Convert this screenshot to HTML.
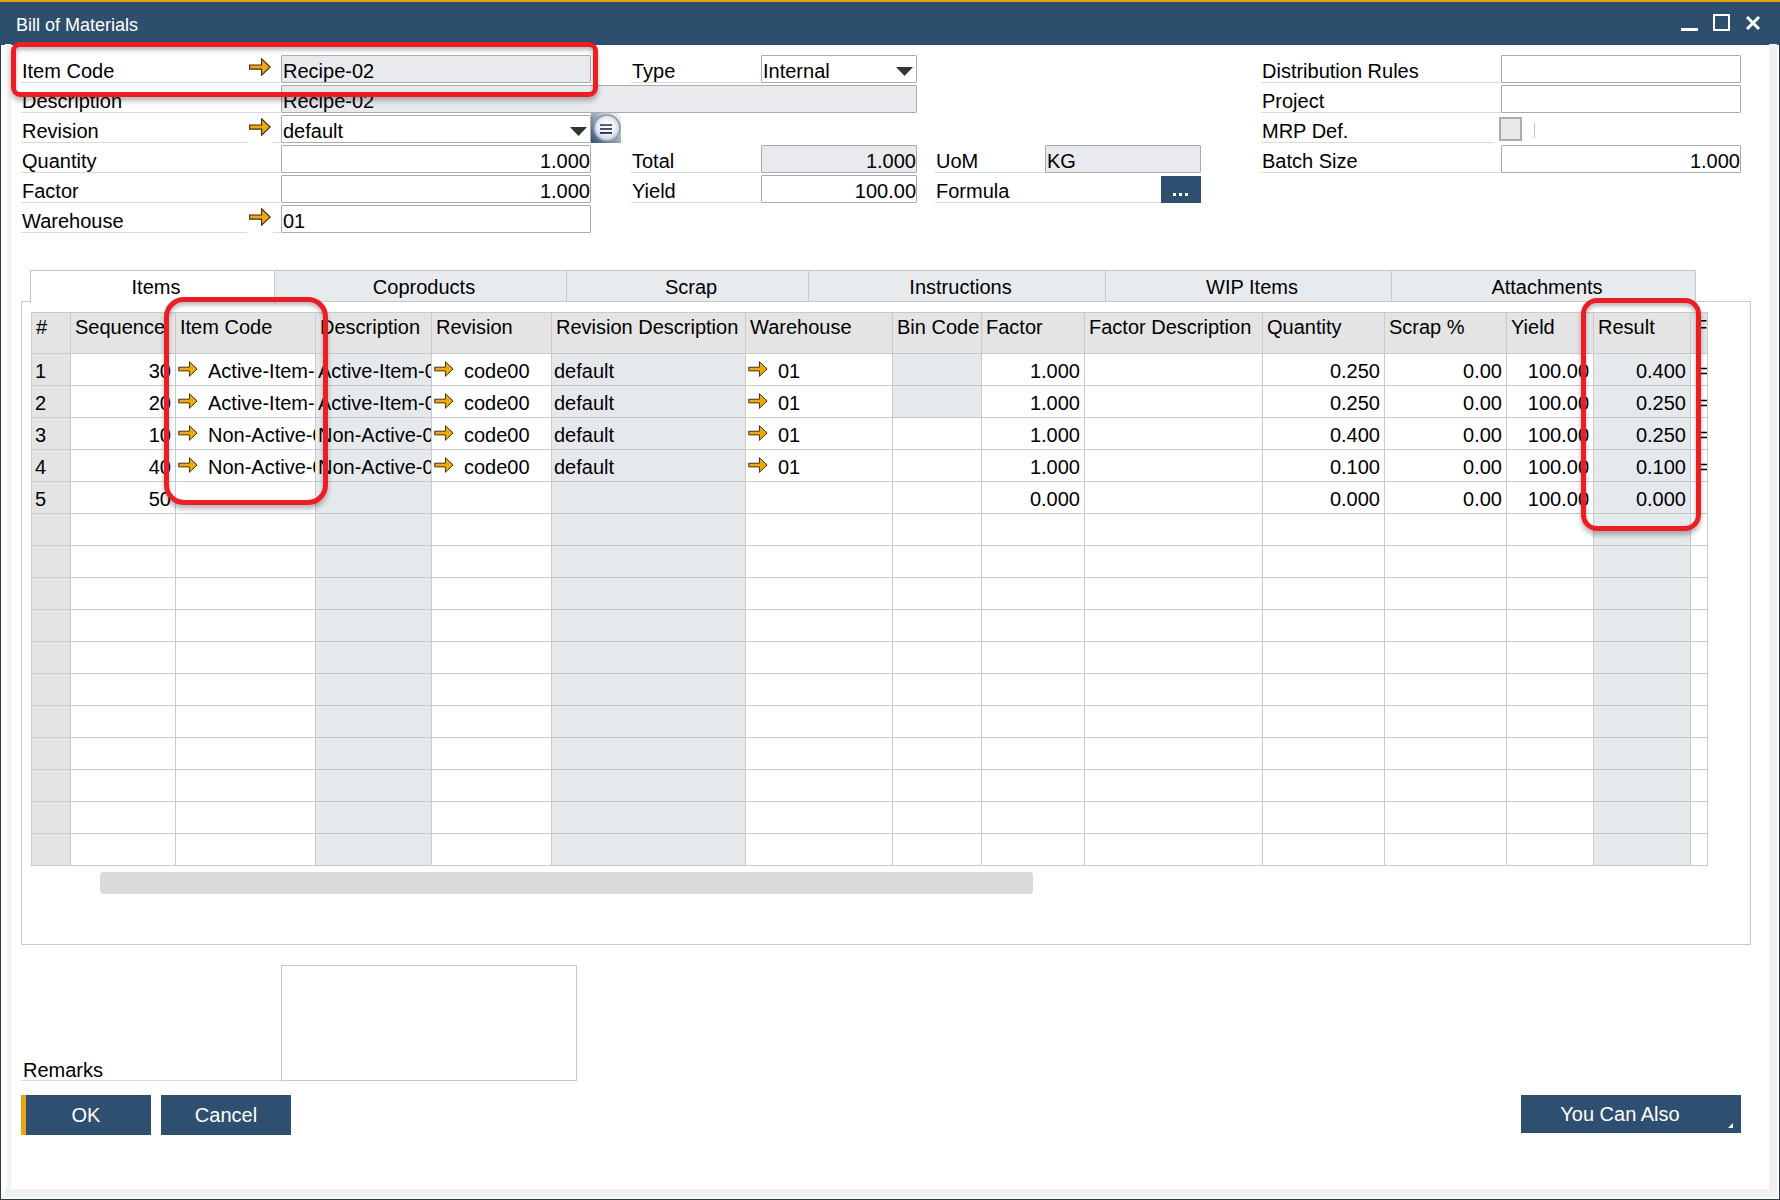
<!DOCTYPE html><html><head><meta charset="utf-8"><style>
*{box-sizing:border-box;margin:0;padding:0}
html,body{width:1780px;height:1200px;overflow:hidden;background:#fff}
body{position:relative;font-family:"Liberation Sans",sans-serif;font-size:20px;color:#000}
.a{position:absolute}
.l{position:absolute;white-space:nowrap;line-height:20px;height:20px}
.ul{position:absolute;height:1px;background:#dadada}
.f{position:absolute;border:1px solid #ababab;border-radius:1px;background:#fff;white-space:nowrap;overflow:hidden}
.f.g{background:#e8eaed}
.f .t{position:absolute;top:5px;left:1px;line-height:20px}
.f .tr{position:absolute;top:5px;right:0px;line-height:20px}
.arr{position:absolute}
.tab{position:absolute;top:270px;height:32px;background:#e8ebee;border-top:1px solid #c4c4c4;border-right:1px solid #c8c8c8;border-bottom:1px solid #c8c8c8;text-align:center;line-height:20px;padding-top:6px;padding-left:7px}
.btn{position:absolute;background:#2e4f6f;color:#fff;text-align:center;line-height:20px}
.rb{position:absolute;border:5px solid #ec1d25;border-radius:16px;box-shadow:inset 0 3px 4px rgba(0,0,0,.28), 0 4px 5px rgba(0,0,0,.28)}
.gc{position:absolute;white-space:nowrap;overflow:hidden;line-height:20px}
</style></head><body>
<div class="a" style="left:0;top:0;width:1780px;height:2px;background:#e5a00b"></div>
<div class="a" style="left:0;top:2px;width:1780px;height:43px;background:#2d4e6c"></div>
<div class="l" style="left:16px;top:15px;font-size:18px;color:#fff">Bill of Materials</div>
<div class="a" style="left:1681px;top:28px;width:17px;height:3px;background:#fff"></div>
<div class="a" style="left:1713px;top:14px;width:17px;height:17px;border:2px solid #fff"></div>
<svg class="a" style="left:1744px;top:14px" width="18" height="18" viewBox="0 0 18 18"><path d="M3 3L15 15M15 3L3 15" stroke="#fff" stroke-width="3"/></svg>
<div class="a" style="left:0;top:44px;width:1px;height:1156px;background:#283b56"></div>
<div class="a" style="left:1779px;top:44px;width:1px;height:1156px;background:#283b56"></div>
<div class="a" style="left:0;top:1199px;width:1780px;height:1px;background:#283b56"></div>
<div class="a" style="left:5px;top:44px;width:6px;height:1145px;background:linear-gradient(to right,#fbfbfb,#efefef)"></div>
<div class="a" style="left:1769px;top:44px;width:8px;height:1153px;background:#f0f0f0"></div>
<div class="a" style="left:5px;top:1189px;width:1772px;height:8px;background:#f0f0f0"></div>
<div class="l" style="left:22px;top:61px">Item Code</div>
<div class="ul" style="left:21px;top:82px;width:260px"></div>
<div class="l" style="left:22px;top:91px">Description</div>
<div class="ul" style="left:21px;top:112px;width:260px"></div>
<div class="l" style="left:22px;top:121px">Revision</div>
<div class="ul" style="left:21px;top:142px;width:226px"></div>
<div class="ul" style="left:273px;top:142px;width:8px"></div>
<div class="l" style="left:22px;top:151px">Quantity</div>
<div class="ul" style="left:21px;top:172px;width:260px"></div>
<div class="l" style="left:22px;top:181px">Factor</div>
<div class="ul" style="left:21px;top:202px;width:260px"></div>
<div class="l" style="left:22px;top:211px">Warehouse</div>
<div class="ul" style="left:21px;top:232px;width:226px"></div>
<div class="ul" style="left:273px;top:232px;width:8px"></div>
<svg class="arr" style="left:249px;top:58px" width="22" height="18" viewBox="0 0 22 18"><path d="M0.6 7H12.6V0.8L21.2 9L12.6 17.2V11.1H0.6Z" fill="#efa80e" stroke="#3d2c0c" stroke-width="1.1" stroke-linejoin="miter"/></svg>
<svg class="arr" style="left:249px;top:118px" width="22" height="18" viewBox="0 0 22 18"><path d="M0.6 7H12.6V0.8L21.2 9L12.6 17.2V11.1H0.6Z" fill="#efa80e" stroke="#3d2c0c" stroke-width="1.1" stroke-linejoin="miter"/></svg>
<svg class="arr" style="left:249px;top:208px" width="22" height="18" viewBox="0 0 22 18"><path d="M0.6 7H12.6V0.8L21.2 9L12.6 17.2V11.1H0.6Z" fill="#efa80e" stroke="#3d2c0c" stroke-width="1.1" stroke-linejoin="miter"/></svg>
<div class="f g" style="left:281px;top:55px;width:310px;height:28px"><span class="t">Recipe-02</span></div>
<div class="f g" style="left:281px;top:85px;width:636px;height:28px"><span class="t">Recipe-02</span></div>
<div class="f" style="left:281px;top:115px;width:310px;height:28px"><span class="t">default</span><svg style="position:absolute;right:3px;top:11px" width="17" height="9" viewBox="0 0 17 9"><path d="M0 0H17L8.5 9Z" fill="#333"/></svg></div>
<div class="f" style="left:281px;top:145px;width:310px;height:28px"><span class="tr">1.000</span></div>
<div class="f" style="left:281px;top:175px;width:310px;height:28px"><span class="tr">1.000</span></div>
<div class="f" style="left:281px;top:205px;width:310px;height:28px"><span class="t">01</span></div>
<svg class="a" style="left:591px;top:113px" width="30" height="30" viewBox="0 0 30 30">
<defs><linearGradient id="bg1" x1="1" y1="0" x2="0" y2="1"><stop offset="0" stop-color="#ffffff"/><stop offset="0.5" stop-color="#9aa6b4"/><stop offset="1" stop-color="#2f4e74"/></linearGradient>
<radialGradient id="rg" cx="0.5" cy="0.45" r="0.55"><stop offset="0" stop-color="#ffffff"/><stop offset="0.55" stop-color="#eef3fa"/><stop offset="1" stop-color="#b8c6d8"/></radialGradient></defs>
<rect x="0" y="0" width="30" height="30" fill="url(#bg1)"/>
<circle cx="16" cy="15" r="13" fill="url(#rg)" stroke="#8f99a6" stroke-width="1.6"/>
<rect x="9" y="11.2" width="12" height="1.7" fill="#3a4858"/><rect x="9" y="15.1" width="12" height="1.7" fill="#30364c"/><rect x="9" y="19.1" width="12" height="1.7" fill="#1a1e40"/></svg>
<div class="l" style="left:632px;top:61px">Type</div>
<div class="ul" style="left:631px;top:82px;width:130px"></div>
<div class="f" style="left:761px;top:55px;width:156px;height:28px"><span class="t">Internal</span><svg style="position:absolute;right:3px;top:11px" width="17" height="9" viewBox="0 0 17 9"><path d="M0 0H17L8.5 9Z" fill="#333"/></svg></div>
<div class="l" style="left:632px;top:151px">Total</div>
<div class="ul" style="left:631px;top:172px;width:130px"></div>
<div class="f g" style="left:761px;top:145px;width:156px;height:28px"><span class="tr">1.000</span></div>
<div class="l" style="left:632px;top:181px">Yield</div>
<div class="ul" style="left:631px;top:202px;width:130px"></div>
<div class="f" style="left:761px;top:175px;width:156px;height:28px"><span class="tr">100.00</span></div>
<div class="l" style="left:936px;top:151px">UoM</div>
<div class="ul" style="left:935px;top:172px;width:110px"></div>
<div class="f g" style="left:1045px;top:145px;width:156px;height:28px"><span class="t">KG</span></div>
<div class="l" style="left:936px;top:181px">Formula</div>
<div class="ul" style="left:935px;top:202px;width:226px"></div>
<div class="btn" style="left:1161px;top:176px;width:40px;height:27px"><div class="a" style="left:12px;top:17px;width:3px;height:3px;background:#fff"></div><div class="a" style="left:18px;top:17px;width:3px;height:3px;background:#fff"></div><div class="a" style="left:24px;top:17px;width:3px;height:3px;background:#fff"></div></div>
<div class="l" style="left:1262px;top:61px">Distribution Rules</div>
<div class="ul" style="left:1261px;top:82px;width:240px"></div>
<div class="f" style="left:1501px;top:55px;width:240px;height:28px"></div>
<div class="l" style="left:1262px;top:91px">Project</div>
<div class="ul" style="left:1261px;top:112px;width:240px"></div>
<div class="f" style="left:1501px;top:85px;width:240px;height:28px"></div>
<div class="l" style="left:1262px;top:121px">MRP Def.</div>
<div class="ul" style="left:1261px;top:142px;width:233px"></div>
<div class="a" style="left:1499px;top:117px;width:23px;height:24px;background:#e9e9e9;border:2px solid #acacac"></div>
<div class="a" style="left:1534px;top:123px;width:1px;height:15px;background:#d8c09a"></div>
<div class="l" style="left:1262px;top:151px">Batch Size</div>
<div class="ul" style="left:1261px;top:172px;width:240px"></div>
<div class="f" style="left:1501px;top:145px;width:240px;height:28px"><span class="tr">1.000</span></div>
<div class="a" style="left:21px;top:301px;width:1730px;height:644px;border:1px solid #cbcbcb"></div>
<div class="tab" style="left:30px;width:245px;height:33px;background:#fff;border-left:1px solid #c4c4c4;border-bottom:none">Items</div>
<div class="tab" style="left:275px;width:292px">Coproducts</div>
<div class="tab" style="left:567px;width:242px">Scrap</div>
<div class="tab" style="left:809px;width:297px">Instructions</div>
<div class="tab" style="left:1106px;width:286px">WIP Items</div>
<div class="tab" style="left:1392px;width:304px">Attachments</div>
<div class="a" style="left:31px;top:312px;width:1676px;height:41px;background:#e4e4e4"></div>
<div class="a" style="left:31px;top:353px;width:39px;height:512px;background:#e4e4e4"></div>
<div class="a" style="left:315px;top:353px;width:116px;height:512px;background:#e6e9ec"></div>
<div class="a" style="left:551px;top:353px;width:194px;height:512px;background:#e6e9ec"></div>
<div class="a" style="left:1593px;top:353px;width:97px;height:512px;background:#e6e9ec"></div>
<div class="a" style="left:892px;top:353px;width:89px;height:64px;background:#e6e9ec"></div>
<div class="a" style="left:31px;top:312px;width:1px;height:554px;background:#cacaca"></div>
<div class="a" style="left:70px;top:312px;width:1px;height:554px;background:#cacaca"></div>
<div class="a" style="left:175px;top:312px;width:1px;height:554px;background:#cacaca"></div>
<div class="a" style="left:315px;top:312px;width:1px;height:554px;background:#cacaca"></div>
<div class="a" style="left:431px;top:312px;width:1px;height:554px;background:#cacaca"></div>
<div class="a" style="left:551px;top:312px;width:1px;height:554px;background:#cacaca"></div>
<div class="a" style="left:745px;top:312px;width:1px;height:554px;background:#cacaca"></div>
<div class="a" style="left:892px;top:312px;width:1px;height:554px;background:#cacaca"></div>
<div class="a" style="left:981px;top:312px;width:1px;height:554px;background:#cacaca"></div>
<div class="a" style="left:1084px;top:312px;width:1px;height:554px;background:#cacaca"></div>
<div class="a" style="left:1262px;top:312px;width:1px;height:554px;background:#cacaca"></div>
<div class="a" style="left:1384px;top:312px;width:1px;height:554px;background:#cacaca"></div>
<div class="a" style="left:1506px;top:312px;width:1px;height:554px;background:#cacaca"></div>
<div class="a" style="left:1593px;top:312px;width:1px;height:554px;background:#cacaca"></div>
<div class="a" style="left:1690px;top:312px;width:1px;height:554px;background:#cacaca"></div>
<div class="a" style="left:1707px;top:312px;width:1px;height:554px;background:#cacaca"></div>
<div class="a" style="left:31px;top:312px;width:1677px;height:1px;background:#cacaca"></div>
<div class="a" style="left:31px;top:353px;width:1677px;height:1px;background:#cacaca"></div>
<div class="a" style="left:31px;top:385px;width:1677px;height:1px;background:#cacaca"></div>
<div class="a" style="left:31px;top:417px;width:1677px;height:1px;background:#cacaca"></div>
<div class="a" style="left:31px;top:449px;width:1677px;height:1px;background:#cacaca"></div>
<div class="a" style="left:31px;top:481px;width:1677px;height:1px;background:#cacaca"></div>
<div class="a" style="left:31px;top:513px;width:1677px;height:1px;background:#cacaca"></div>
<div class="a" style="left:31px;top:545px;width:1677px;height:1px;background:#cacaca"></div>
<div class="a" style="left:31px;top:577px;width:1677px;height:1px;background:#cacaca"></div>
<div class="a" style="left:31px;top:609px;width:1677px;height:1px;background:#cacaca"></div>
<div class="a" style="left:31px;top:641px;width:1677px;height:1px;background:#cacaca"></div>
<div class="a" style="left:31px;top:673px;width:1677px;height:1px;background:#cacaca"></div>
<div class="a" style="left:31px;top:705px;width:1677px;height:1px;background:#cacaca"></div>
<div class="a" style="left:31px;top:737px;width:1677px;height:1px;background:#cacaca"></div>
<div class="a" style="left:31px;top:769px;width:1677px;height:1px;background:#cacaca"></div>
<div class="a" style="left:31px;top:801px;width:1677px;height:1px;background:#cacaca"></div>
<div class="a" style="left:31px;top:833px;width:1677px;height:1px;background:#cacaca"></div>
<div class="a" style="left:31px;top:865px;width:1677px;height:1px;background:#cacaca"></div>
<div class="gc" style="left:36px;top:317px;width:34px;height:24px">#</div>
<div class="gc" style="left:75px;top:317px;width:100px;height:24px">Sequence</div>
<div class="gc" style="left:180px;top:317px;width:135px;height:24px">Item Code</div>
<div class="gc" style="left:320px;top:317px;width:111px;height:24px">Description</div>
<div class="gc" style="left:436px;top:317px;width:115px;height:24px">Revision</div>
<div class="gc" style="left:556px;top:317px;width:189px;height:24px">Revision Description</div>
<div class="gc" style="left:750px;top:317px;width:142px;height:24px">Warehouse</div>
<div class="gc" style="left:897px;top:317px;width:84px;height:24px">Bin Code</div>
<div class="gc" style="left:986px;top:317px;width:98px;height:24px">Factor</div>
<div class="gc" style="left:1089px;top:317px;width:173px;height:24px">Factor Description</div>
<div class="gc" style="left:1267px;top:317px;width:117px;height:24px">Quantity</div>
<div class="gc" style="left:1389px;top:317px;width:117px;height:24px">Scrap %</div>
<div class="gc" style="left:1511px;top:317px;width:82px;height:24px">Yield</div>
<div class="gc" style="left:1598px;top:317px;width:92px;height:24px">Result</div>
<div class="gc" style="left:1695px;top:317px;width:12px;height:24px">F</div>
<div class="gc" style="left:35px;top:361px;width:35px;height:22px">1</div>
<div class="gc" style="left:70px;top:361px;width:105px;height:22px;text-align:right;padding-right:4px">30</div>
<svg class="arr" style="left:178px;top:361px" width="20" height="16" viewBox="0 0 22 18"><path d="M0.6 7H12.6V0.8L21.2 9L12.6 17.2V11.1H0.6Z" fill="#efa80e" stroke="#3d2c0c" stroke-width="1.1" stroke-linejoin="miter"/></svg>
<div class="gc" style="left:208px;top:361px;width:107px;height:22px">Active-Item-</div>
<div class="gc" style="left:318px;top:361px;width:113px;height:22px">Active-Item-0</div>
<svg class="arr" style="left:434px;top:361px" width="20" height="16" viewBox="0 0 22 18"><path d="M0.6 7H12.6V0.8L21.2 9L12.6 17.2V11.1H0.6Z" fill="#efa80e" stroke="#3d2c0c" stroke-width="1.1" stroke-linejoin="miter"/></svg>
<div class="gc" style="left:464px;top:361px;width:87px;height:22px">code00</div>
<div class="gc" style="left:554px;top:361px;width:191px;height:22px">default</div>
<svg class="arr" style="left:748px;top:361px" width="20" height="16" viewBox="0 0 22 18"><path d="M0.6 7H12.6V0.8L21.2 9L12.6 17.2V11.1H0.6Z" fill="#efa80e" stroke="#3d2c0c" stroke-width="1.1" stroke-linejoin="miter"/></svg>
<div class="gc" style="left:778px;top:361px;width:114px;height:22px">01</div>
<div class="gc" style="left:981px;top:361px;width:103px;height:22px;text-align:right;padding-right:4px">1.000</div>
<div class="gc" style="left:1262px;top:361px;width:122px;height:22px;text-align:right;padding-right:4px">0.250</div>
<div class="gc" style="left:1384px;top:361px;width:122px;height:22px;text-align:right;padding-right:4px">0.00</div>
<div class="gc" style="left:1506px;top:361px;width:87px;height:22px;text-align:right;padding-right:4px">100.00</div>
<div class="gc" style="left:1593px;top:361px;width:97px;height:22px;text-align:right;padding-right:4px">0.400</div>
<div class="gc" style="left:1697px;top:361px;width:10px;height:22px">=</div>
<div class="gc" style="left:35px;top:393px;width:35px;height:22px">2</div>
<div class="gc" style="left:70px;top:393px;width:105px;height:22px;text-align:right;padding-right:4px">20</div>
<svg class="arr" style="left:178px;top:393px" width="20" height="16" viewBox="0 0 22 18"><path d="M0.6 7H12.6V0.8L21.2 9L12.6 17.2V11.1H0.6Z" fill="#efa80e" stroke="#3d2c0c" stroke-width="1.1" stroke-linejoin="miter"/></svg>
<div class="gc" style="left:208px;top:393px;width:107px;height:22px">Active-Item-</div>
<div class="gc" style="left:318px;top:393px;width:113px;height:22px">Active-Item-0</div>
<svg class="arr" style="left:434px;top:393px" width="20" height="16" viewBox="0 0 22 18"><path d="M0.6 7H12.6V0.8L21.2 9L12.6 17.2V11.1H0.6Z" fill="#efa80e" stroke="#3d2c0c" stroke-width="1.1" stroke-linejoin="miter"/></svg>
<div class="gc" style="left:464px;top:393px;width:87px;height:22px">code00</div>
<div class="gc" style="left:554px;top:393px;width:191px;height:22px">default</div>
<svg class="arr" style="left:748px;top:393px" width="20" height="16" viewBox="0 0 22 18"><path d="M0.6 7H12.6V0.8L21.2 9L12.6 17.2V11.1H0.6Z" fill="#efa80e" stroke="#3d2c0c" stroke-width="1.1" stroke-linejoin="miter"/></svg>
<div class="gc" style="left:778px;top:393px;width:114px;height:22px">01</div>
<div class="gc" style="left:981px;top:393px;width:103px;height:22px;text-align:right;padding-right:4px">1.000</div>
<div class="gc" style="left:1262px;top:393px;width:122px;height:22px;text-align:right;padding-right:4px">0.250</div>
<div class="gc" style="left:1384px;top:393px;width:122px;height:22px;text-align:right;padding-right:4px">0.00</div>
<div class="gc" style="left:1506px;top:393px;width:87px;height:22px;text-align:right;padding-right:4px">100.00</div>
<div class="gc" style="left:1593px;top:393px;width:97px;height:22px;text-align:right;padding-right:4px">0.250</div>
<div class="gc" style="left:1697px;top:393px;width:10px;height:22px">=</div>
<div class="gc" style="left:35px;top:425px;width:35px;height:22px">3</div>
<div class="gc" style="left:70px;top:425px;width:105px;height:22px;text-align:right;padding-right:4px">10</div>
<svg class="arr" style="left:178px;top:425px" width="20" height="16" viewBox="0 0 22 18"><path d="M0.6 7H12.6V0.8L21.2 9L12.6 17.2V11.1H0.6Z" fill="#efa80e" stroke="#3d2c0c" stroke-width="1.1" stroke-linejoin="miter"/></svg>
<div class="gc" style="left:208px;top:425px;width:107px;height:22px">Non-Active-0</div>
<div class="gc" style="left:318px;top:425px;width:113px;height:22px">Non-Active-0</div>
<svg class="arr" style="left:434px;top:425px" width="20" height="16" viewBox="0 0 22 18"><path d="M0.6 7H12.6V0.8L21.2 9L12.6 17.2V11.1H0.6Z" fill="#efa80e" stroke="#3d2c0c" stroke-width="1.1" stroke-linejoin="miter"/></svg>
<div class="gc" style="left:464px;top:425px;width:87px;height:22px">code00</div>
<div class="gc" style="left:554px;top:425px;width:191px;height:22px">default</div>
<svg class="arr" style="left:748px;top:425px" width="20" height="16" viewBox="0 0 22 18"><path d="M0.6 7H12.6V0.8L21.2 9L12.6 17.2V11.1H0.6Z" fill="#efa80e" stroke="#3d2c0c" stroke-width="1.1" stroke-linejoin="miter"/></svg>
<div class="gc" style="left:778px;top:425px;width:114px;height:22px">01</div>
<div class="gc" style="left:981px;top:425px;width:103px;height:22px;text-align:right;padding-right:4px">1.000</div>
<div class="gc" style="left:1262px;top:425px;width:122px;height:22px;text-align:right;padding-right:4px">0.400</div>
<div class="gc" style="left:1384px;top:425px;width:122px;height:22px;text-align:right;padding-right:4px">0.00</div>
<div class="gc" style="left:1506px;top:425px;width:87px;height:22px;text-align:right;padding-right:4px">100.00</div>
<div class="gc" style="left:1593px;top:425px;width:97px;height:22px;text-align:right;padding-right:4px">0.250</div>
<div class="gc" style="left:1697px;top:425px;width:10px;height:22px">=</div>
<div class="gc" style="left:35px;top:457px;width:35px;height:22px">4</div>
<div class="gc" style="left:70px;top:457px;width:105px;height:22px;text-align:right;padding-right:4px">40</div>
<svg class="arr" style="left:178px;top:457px" width="20" height="16" viewBox="0 0 22 18"><path d="M0.6 7H12.6V0.8L21.2 9L12.6 17.2V11.1H0.6Z" fill="#efa80e" stroke="#3d2c0c" stroke-width="1.1" stroke-linejoin="miter"/></svg>
<div class="gc" style="left:208px;top:457px;width:107px;height:22px">Non-Active-0</div>
<div class="gc" style="left:318px;top:457px;width:113px;height:22px">Non-Active-0</div>
<svg class="arr" style="left:434px;top:457px" width="20" height="16" viewBox="0 0 22 18"><path d="M0.6 7H12.6V0.8L21.2 9L12.6 17.2V11.1H0.6Z" fill="#efa80e" stroke="#3d2c0c" stroke-width="1.1" stroke-linejoin="miter"/></svg>
<div class="gc" style="left:464px;top:457px;width:87px;height:22px">code00</div>
<div class="gc" style="left:554px;top:457px;width:191px;height:22px">default</div>
<svg class="arr" style="left:748px;top:457px" width="20" height="16" viewBox="0 0 22 18"><path d="M0.6 7H12.6V0.8L21.2 9L12.6 17.2V11.1H0.6Z" fill="#efa80e" stroke="#3d2c0c" stroke-width="1.1" stroke-linejoin="miter"/></svg>
<div class="gc" style="left:778px;top:457px;width:114px;height:22px">01</div>
<div class="gc" style="left:981px;top:457px;width:103px;height:22px;text-align:right;padding-right:4px">1.000</div>
<div class="gc" style="left:1262px;top:457px;width:122px;height:22px;text-align:right;padding-right:4px">0.100</div>
<div class="gc" style="left:1384px;top:457px;width:122px;height:22px;text-align:right;padding-right:4px">0.00</div>
<div class="gc" style="left:1506px;top:457px;width:87px;height:22px;text-align:right;padding-right:4px">100.00</div>
<div class="gc" style="left:1593px;top:457px;width:97px;height:22px;text-align:right;padding-right:4px">0.100</div>
<div class="gc" style="left:1697px;top:457px;width:10px;height:22px">=</div>
<div class="gc" style="left:35px;top:489px;width:35px;height:22px">5</div>
<div class="gc" style="left:70px;top:489px;width:105px;height:22px;text-align:right;padding-right:4px">50</div>
<div class="gc" style="left:981px;top:489px;width:103px;height:22px;text-align:right;padding-right:4px">0.000</div>
<div class="gc" style="left:1262px;top:489px;width:122px;height:22px;text-align:right;padding-right:4px">0.000</div>
<div class="gc" style="left:1384px;top:489px;width:122px;height:22px;text-align:right;padding-right:4px">0.00</div>
<div class="gc" style="left:1506px;top:489px;width:87px;height:22px;text-align:right;padding-right:4px">100.00</div>
<div class="gc" style="left:1593px;top:489px;width:97px;height:22px;text-align:right;padding-right:4px">0.000</div>
<div class="a" style="left:100px;top:872px;width:933px;height:22px;background:#dadada;border-radius:4px"></div>
<div class="l" style="left:23px;top:1060px">Remarks</div>
<div class="ul" style="left:21px;top:1080px;width:260px"></div>
<div class="a" style="left:281px;top:965px;width:296px;height:116px;border:1px solid #c8c8c8"></div>
<div class="btn" style="left:21px;top:1095px;width:130px;height:40px;padding-top:10px">OK</div>
<div class="a" style="left:21px;top:1095px;width:5px;height:40px;background:#e9a313"></div>
<div class="btn" style="left:161px;top:1095px;width:130px;height:40px;padding-top:10px">Cancel</div>
<div class="btn" style="left:1521px;top:1095px;width:220px;height:38px;padding-top:9px;padding-right:22px">You Can Also<svg style="position:absolute;left:207px;top:28px" width="5" height="5" viewBox="0 0 5 5"><path d="M5 0V5H0Z" fill="#fff"/></svg></div>
<div class="rb" style="left:11px;top:42px;width:587px;height:55px;border-radius:9px"></div>
<div class="rb" style="left:164px;top:297px;width:164px;height:208px;border-radius:20px"></div>
<div class="rb" style="left:1581px;top:298px;width:120px;height:233px;border-radius:16px"></div>
</body></html>
